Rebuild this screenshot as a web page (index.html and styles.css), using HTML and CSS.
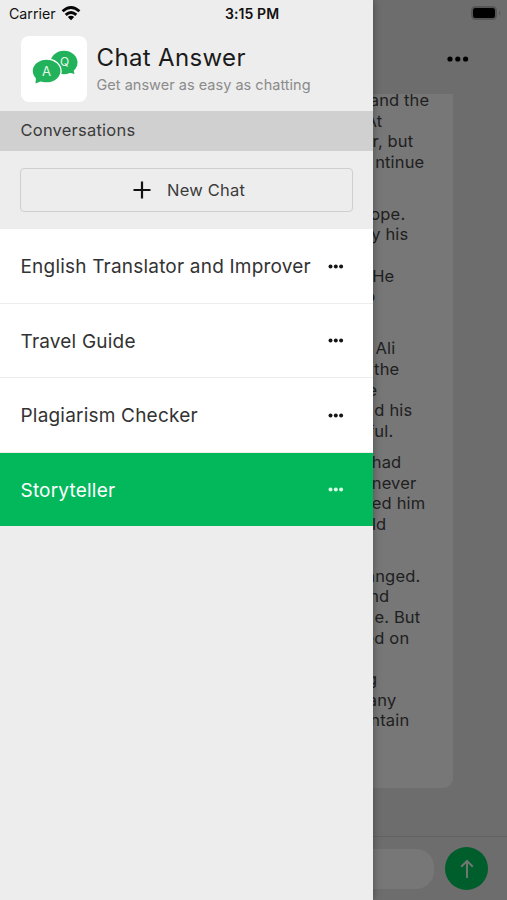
FILE: index.html
```html
<!DOCTYPE html>
<html lang="en">
<head>
<meta charset="utf-8">
<title>Chat Answer</title>
<link rel="stylesheet" href="styles.css">
</head>
<body>
<div class="screen">
  <main class="chat">
    <header class="chat-header">
      <svg class="battery" viewBox="0 0 32 16" width="32" height="16"><rect x="1" y="1" width="26" height="14" rx="4.5" fill="#555"/><rect x="3" y="3" width="22" height="10" rx="2.5"/><path d="M29 5.5q2 2.5 0 5z" fill="#555"/></svg>
      <svg class="more" viewBox="0 0 22 6" width="22" height="6"><circle cx="3" cy="3" r="2.6"/><circle cx="10.8" cy="3" r="2.6"/><circle cx="18.6" cy="3" r="2.6"/></svg>
    </header>
    <section class="messages">
      <div class="bubble">
        <p><span class="e429">and the</span><span class="e382">At</span><span class="e413">r, but</span><span class="e424">ntinue</span><span></span></p>
        <p><span class="e405">ope.</span><span class="e408">y his</span><span></span><span class="e394">He</span><span class="e375">o</span><span></span></p>
        <p><span class="e395">Ali</span><span class="e399">the</span><span class="e377">e</span><span class="e412">d his</span><span class="e393">ful.</span></p>
        <p><span class="e401">had</span><span class="e416">never</span><span class="e425">ed him</span><span class="e386">ld</span><span></span></p>
        <p><span class="e420">anged.</span><span class="e389">nd</span><span class="e420">e. But</span><span class="e409">ed on</span><span></span><span class="e377">g</span><span class="e396">any</span><span class="e409">ntain</span></p>
      </div>
    </section>
    <footer class="composer">
      <div class="field"></div>
      <div class="send"><svg viewBox="0 0 14 20" width="14" height="20"><path d="M7 19V2M1.2 7.8L7 2l5.800 5.800" fill="none" stroke="#6f7771" stroke-width="2"/></svg></div>
    </footer>
  </main>
  <aside class="drawer">
    <div class="status">
      <span class="carrier">Carrier</span>
      <svg viewBox="0 0 20 15" width="20" height="15"><g fill="none" stroke="#050505" stroke-width="2.800"><path d="M1.600 5.300Q10-2.300 18.400 5.300M4.700 8.900Q10 4.100 15.300 8.900"/></g><path d="M6.800 11Q10 8.400 13.200 11L10 14.200z"/></svg>
      <span class="time">3:15 PM</span>
    </div>
    <div class="brand">
      <div class="logo"><svg viewBox="0 0 66 66" width="66" height="66">
        <g fill="#22b25b"><path d="M46 36l7.500 2-1.500-6z"/><ellipse cx="43" cy="26.500" rx="13.500" ry="11.800"/></g>
        <ellipse cx="25.600" cy="35" rx="14.500" ry="12" fill="#22b25b" stroke="#fff" stroke-width="1.300"/>
        <path d="M15 41l-.5 6.500L22 44.500z" fill="#22b25b"/>
        <text x="43.500" y="29.500" class="logo-q">Q</text><text x="25.500" y="39.500" class="logo-a">A</text>
      </svg></div>
      <div><h1>Chat Answer</h1><div class="tagline">Get answer as easy as chatting</div></div>
    </div>
    <div class="section-title">Conversations</div>
    <div class="new-wrap"><button class="new-chat"><svg viewBox="0 0 18 18" width="18" height="18"><path d="M9 .5v17M.5 9h17" stroke="#111" stroke-width="2.200"/></svg><span>New Chat</span></button></div>
    <nav>
      <div class="row"><span class="name">English Translator and Improver</span><svg class="dots" viewBox="0 0 16 5" width="16" height="5"><circle cx="2.500" cy="2.500" r="2"/><circle cx="7.800" cy="2.500" r="2"/><circle cx="13.100" cy="2.500" r="2"/></svg></div>
      <div class="row"><span class="name">Travel Guide</span><svg class="dots" viewBox="0 0 16 5" width="16" height="5"><circle cx="2.500" cy="2.500" r="2"/><circle cx="7.800" cy="2.500" r="2"/><circle cx="13.100" cy="2.500" r="2"/></svg></div>
      <div class="row"><span class="name">Plagiarism Checker</span><svg class="dots" viewBox="0 0 16 5" width="16" height="5"><circle cx="2.500" cy="2.500" r="2"/><circle cx="7.800" cy="2.500" r="2"/><circle cx="13.100" cy="2.500" r="2"/></svg></div>
      <div class="row active"><span class="name">Storyteller</span><svg class="dots" viewBox="0 0 16 5" width="16" height="5"><circle cx="2.500" cy="2.500" r="2"/><circle cx="7.800" cy="2.500" r="2"/><circle cx="13.100" cy="2.500" r="2"/></svg></div>
    </nav>
  </aside>
</div>
</body>
</html>
```
FILE: styles.css
```css
* { box-sizing: border-box; }
body { margin: 0; font-family: Inter, "Liberation Sans", sans-serif; }
h1, p { margin: 0; font-weight: 400; }
svg { display: block; flex: none; }
.screen { position: relative; display: flex; justify-content: flex-end; width: 507px; height: 900px; overflow: hidden; background: #6d6d6d; }

.chat { width: 135px; height: 900px; display: flex; flex-direction: column; overflow: hidden; }
.chat-header { height: 94px; flex: none; display: flex; flex-direction: column; align-items: flex-end; padding-top: 5px; }
.battery { margin-right: 5px; }
.more { margin: 35px 38px 0 0; }
.messages { flex: 1; overflow: hidden; }
.bubble { width: 81px; height: 694px; background: #777; border-radius: 0 0 10px 0; color: #202020; font-size: 16.5px; letter-spacing: .15px; line-height: 20.7px; overflow: hidden; }
.bubble p { margin-bottom: 10.3px; }
.bubble p:first-child { margin-top: -4px; }
.bubble span { display: flex; justify-content: flex-end; height: 20.7px; margin-left: -.7px; white-space: nowrap; }
.e375 { width: 4px; } .e377 { width: 6px; } .e382 { width: 11px; } .e386 { width: 15px; }
.e389 { width: 18px; } .e393 { width: 22px; } .e394 { width: 23px; } .e395 { width: 24px; }
.e396 { width: 25px; } .e399 { width: 28px; } .e401 { width: 30px; } .e405 { width: 34px; }
.e408 { width: 37px; } .e409 { width: 38px; } .e412 { width: 41px; } .e413 { width: 42px; }
.e416 { width: 45px; } .e420 { width: 49px; } .e424 { width: 53px; } .e425 { width: 54px; }
.e429 { width: 58px; }
.composer { height: 64px; flex: none; display: flex; align-items: center; gap: 11px; border-top: 1px solid #626262; }
.field { width: 62px; height: 40px; background: #777; border-radius: 0 18px 18px 0; }
.send { width: 43px; height: 43px; border-radius: 50%; background: #005d2c; display: flex; align-items: center; justify-content: center; }

.drawer { position: absolute; left: 0; top: 0; width: 372.5px; height: 900px; background: #ededed; box-shadow: 0 0 8px rgba(0,0,0,.35); color: #333; }
.status { height: 27px; padding: 0 0 0 9px; display: flex; align-items: center; color: #111; }
.carrier { width: 52px; font-size: 14.2px; }
.time { margin-left: 144px; font-weight: 600; font-size: 14px; letter-spacing: .08px; white-space: nowrap; }
.brand { height: 84px; padding: 9px 0 0 20.5px; display: flex; gap: 10px; }
.logo { width: 66px; height: 66px; background: #fff; border-radius: 8px; }
.logo text { fill: #e2f7e9; text-anchor: middle; }
.logo-q { font-size: 12px; }
.logo-a { font-size: 13px; }
h1 { font-size: 24px; line-height: 30px; margin-top: 7px; letter-spacing: .35px; color: #1b1b1b; white-space: nowrap; }
.tagline { font-size: 14.5px; line-height: 20px; margin-top: 2px; letter-spacing: .02px; color: #8b8b8b; white-space: nowrap; }
.section-title { height: 40px; line-height: 39px; padding-left: 20.5px; background: #d0d0d0; font-size: 16.5px; letter-spacing: .22px; color: #3b3b3b; }
.new-wrap { height: 78px; padding: 17px 19px 0 20px; }
.new-chat { width: 333px; height: 44px; border: 1px solid #cfcfcf; border-radius: 4px; background: transparent; display: flex; align-items: center; gap: 16px; padding: 0 0 0 112px; font: 16.5px Inter, sans-serif; letter-spacing: .22px; color: #3b3b3b; }
.row { height: 74.5px; padding: 1px 28.5px 0 20.5px; display: flex; align-items: center; justify-content: space-between; background: #fff; border-bottom: 1px solid #ededed; font-size: 19px; letter-spacing: .2px; white-space: nowrap; }
.name { padding-top: 1px; }
.dots { fill: #161616; }
.active { height: 73.5px; background: #03b85b; color: #fff; border: 0; }
.active .dots { fill: #d7ffe6; }
```
